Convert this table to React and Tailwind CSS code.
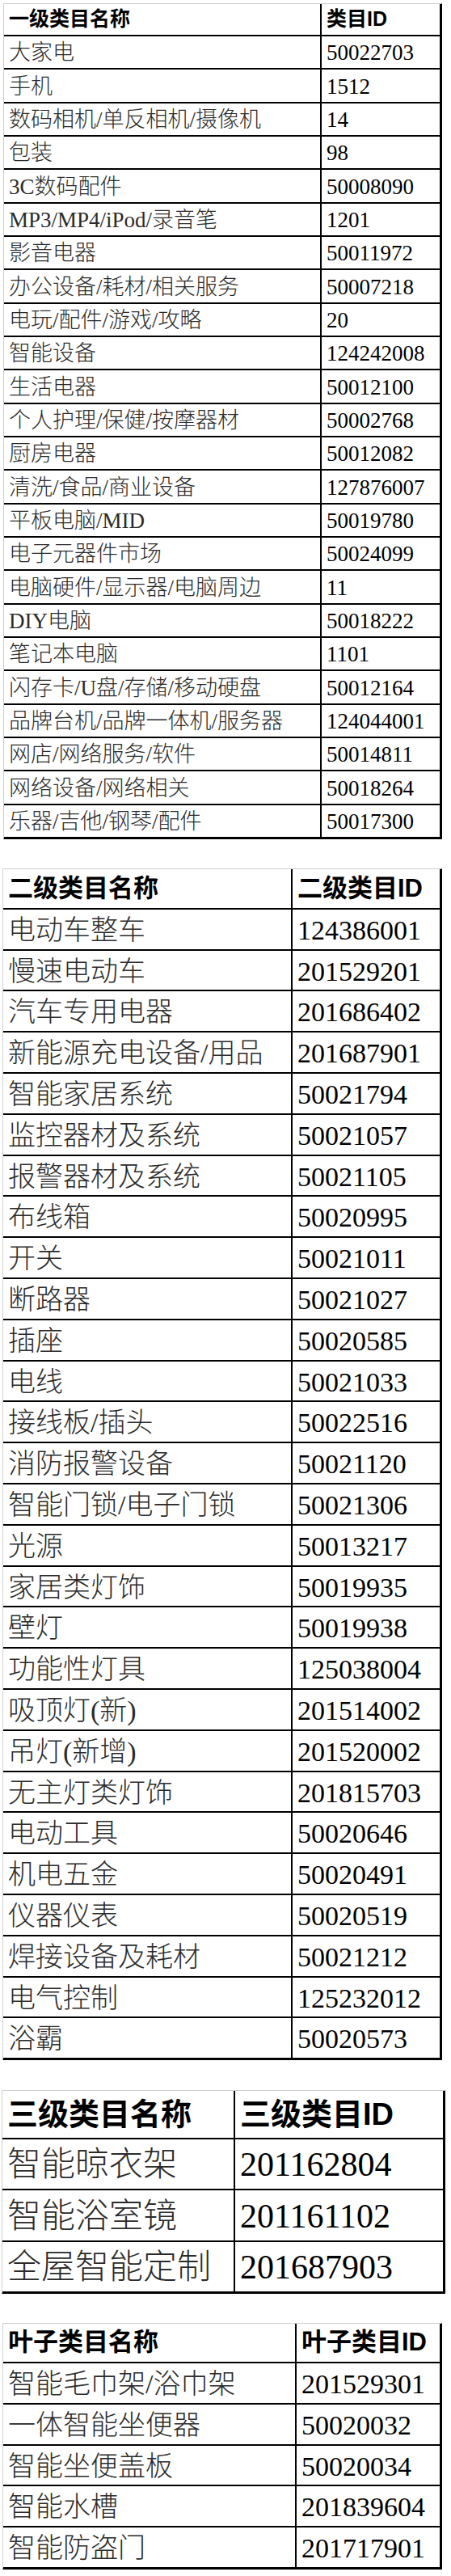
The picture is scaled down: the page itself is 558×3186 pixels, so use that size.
const LEVEL1 = [
  ["大家电", "50022703"],
  ["手机", "1512"],
  ["数码相机/单反相机/摄像机", "14"],
  ["包装", "98"],
  ["3C数码配件", "50008090"],
  ["MP3/MP4/iPod/录音笔", "1201"],
  ["影音电器", "50011972"],
  ["办公设备/耗材/相关服务", "50007218"],
  ["电玩/配件/游戏/攻略", "20"],
  ["智能设备", "124242008"],
  ["生活电器", "50012100"],
  ["个人护理/保健/按摩器材", "50002768"],
  ["厨房电器", "50012082"],
  ["清洗/食品/商业设备", "127876007"],
  ["平板电脑/MID", "50019780"],
  ["电子元器件市场", "50024099"],
  ["电脑硬件/显示器/电脑周边", "11"],
  ["DIY电脑", "50018222"],
  ["笔记本电脑", "1101"],
  ["闪存卡/U盘/存储/移动硬盘", "50012164"],
  ["品牌台机/品牌一体机/服务器", "124044001"],
  ["网店/网络服务/软件", "50014811"],
  ["网络设备/网络相关", "50018264"],
  ["乐器/吉他/钢琴/配件", "50017300"],
];

const LEVEL2 = [
  ["电动车整车", "124386001"],
  ["慢速电动车", "201529201"],
  ["汽车专用电器", "201686402"],
  ["新能源充电设备/用品", "201687901"],
  ["智能家居系统", "50021794"],
  ["监控器材及系统", "50021057"],
  ["报警器材及系统", "50021105"],
  ["布线箱", "50020995"],
  ["开关", "50021011"],
  ["断路器", "50021027"],
  ["插座", "50020585"],
  ["电线", "50021033"],
  ["接线板/插头", "50022516"],
  ["消防报警设备", "50021120"],
  ["智能门锁/电子门锁", "50021306"],
  ["光源", "50013217"],
  ["家居类灯饰", "50019935"],
  ["壁灯", "50019938"],
  ["功能性灯具", "125038004"],
  ["吸顶灯(新)", "201514002"],
  ["吊灯(新增)", "201520002"],
  ["无主灯类灯饰", "201815703"],
  ["电动工具", "50020646"],
  ["机电五金", "50020491"],
  ["仪器仪表", "50020519"],
  ["焊接设备及耗材", "50021212"],
  ["电气控制", "125232012"],
  ["浴霸", "50020573"],
];

const LEVEL3 = [
  ["智能晾衣架", "201162804"],
  ["智能浴室镜", "201161102"],
  ["全屋智能定制", "201687903"],
];

const LEAF = [
  ["智能毛巾架/浴巾架", "201529301"],
  ["一体智能坐便器", "50020032"],
  ["智能坐便盖板", "50020034"],
  ["智能水槽", "201839604"],
  ["智能防盗门", "201717901"],
];

const headFont = { fontFamily: '"Liberation Sans", "Noto Sans CJK SC", sans-serif' };
const bodyFont = { fontFamily: '"Liberation Serif", "Noto Sans CJK SC", serif' };

const CategoryTable = ({ head, rows, box, first, second, headRow, bodyRow, headText, bodyText }) => (
  <div className={`flex flex-col border-t border-l border-[#cfcfcf] border-r-[1px] border-r-black border-b-[1px] border-b-black ${box}`}>
    <div className={`flex ${headRow}`}>
      <div
        className={`${first} flex items-center pl-[6px] border-r-2 border-b-2 border-black font-bold text-black ${headText}`}
        style={headFont}
      >
        {head[0]}
      </div>
      <div
        className={`${second} flex items-center pl-[6px] border-r-2 border-b-2 border-black font-bold text-black ${headText}`}
        style={headFont}
      >
        {head[1]}
      </div>
    </div>
    {rows.map(([name, id]) => (
      <div key={id} className={`flex ${bodyRow}`}>
        <div
          className={`${first} flex items-center pl-[6px] pt-[2px] border-r-2 border-b-2 border-black font-light text-[#2b2b2b] whitespace-nowrap ${bodyText}`}
          style={bodyFont}
        >
          {name}
        </div>
        <div
          className={`${second} flex items-center pl-[6px] pt-[2px] border-r-2 border-b-2 border-black text-black ${bodyText}`}
          style={bodyFont}
        >
          {id}
        </div>
      </div>
    ))}
  </div>
);

export default function App() {
  return (
    <div className="w-[558px] h-[3186px] bg-white overflow-hidden">
      <CategoryTable
        head={["一级类目名称", "类目ID"]}
        rows={LEVEL1}
        box="ml-[4px] mt-[4px] w-[543px]"
        first="w-[393px]"
        second="flex-1"
        headRow="h-[40px]"
        bodyRow="h-[41.33px]"
        headText="text-[25px]"
        bodyText="text-[27px]"
      />
      <CategoryTable
        head={["二级类目名称", "二级类目ID"]}
        rows={LEVEL2}
        box="ml-[3px] mt-[36px] w-[544px]"
        first="w-[358px]"
        second="flex-1"
        headRow="h-[50px]"
        bodyRow="h-[50.8px]"
        headText="text-[31px]"
        bodyText="text-[34px]"
      />
      <CategoryTable
        head={["三级类目名称", "三级类目ID"]}
        rows={LEVEL3}
        box="ml-[2px] mt-[37px] w-[549px]"
        first="w-[288px]"
        second="flex-1"
        headRow="h-[60px]"
        bodyRow="h-[63.3px]"
        headText="text-[38px]"
        bodyText="text-[42px]"
      />
      <CategoryTable
        head={["叶子类目名称", "叶子类目ID"]}
        rows={LEAF}
        box="ml-[3px] mt-[36px] w-[544px]"
        first="w-[363px]"
        second="flex-1"
        headRow="h-[49px]"
        bodyRow="h-[50.8px]"
        headText="text-[31px]"
        bodyText="text-[34px]"
      />
    </div>
  );
}
